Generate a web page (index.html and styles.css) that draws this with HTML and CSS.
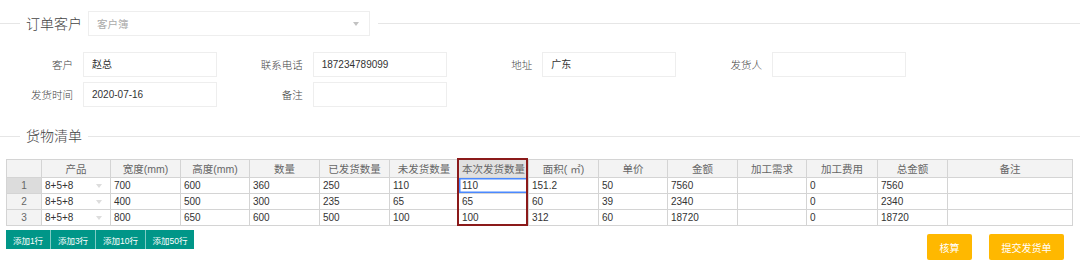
FILE: index.html
```html
<!DOCTYPE html>
<html lang="zh-CN">
<head>
    <meta charset="UTF-8">
    <title>发货单</title>
    <link rel="stylesheet" href="styles.css">
</head>
<body>

<div class="page">
    <!-- 订单客户 -->
    <div class="legend-row top">
        <span class="rule short"></span>
        <span class="legend">订单客户</span>
        <div class="select-box">
            <span class="placeholder">客户簿</span>
            <span class="caret"></span>
        </div>
        <span class="rule"></span>
    </div>

    <div class="form-grid">
        <div class="form-item"><label>客户</label><div class="input">赵总</div></div>
        <div class="form-item"><label>联系电话</label><div class="input">187234789099</div></div>
        <div class="form-item"><label>地址</label><div class="input">广东</div></div>
        <div class="form-item"><label>发货人</label><div class="input"></div></div>
        <div class="form-item"><label>发货时间</label><div class="input">2020-07-16</div></div>
        <div class="form-item"><label>备注</label><div class="input"></div></div>
    </div>

    <!-- 货物清单 -->
    <div class="legend-row goods">
        <span class="rule short"></span>
        <span class="legend">货物清单</span>
        <span class="rule"></span>
    </div>

    <div class="grid-wrap">
        <table class="grid">
            <colgroup>
                <col style="width:35px">
                <col style="width:69px">
                <col style="width:70px">
                <col style="width:69px">
                <col style="width:70px">
                <col style="width:70px">
                <col style="width:69px">
                <col style="width:70px">
                <col style="width:70px">
                <col style="width:69px">
                <col style="width:70px">
                <col style="width:69px">
                <col style="width:71px">
                <col style="width:70px">
                <col style="width:125px">
            </colgroup>
            <thead>
            <tr>
                <th class="corner"></th>
                <th>产品</th>
                <th>宽度(mm)</th>
                <th>高度(mm)</th>
                <th>数量</th>
                <th>已发货数量</th>
                <th>未发货数量</th>
                <th class="current">本次发货数量</th>
                <th>面积( ㎡)</th>
                <th>单价</th>
                <th>金额</th>
                <th>加工需求</th>
                <th>加工费用</th>
                <th>总金额</th>
                <th>备注</th>
            </tr>
            </thead>
            <tbody>
            <tr>
                <th class="row-no active">1</th>
                <td class="dropdown">8+5+8</td>
                <td>700</td><td>600</td><td>360</td><td>250</td><td>110</td>
                <td class="selected">110</td>
                <td>151.2</td><td>50</td><td>7560</td><td></td><td>0</td><td>7560</td><td></td>
            </tr>
            <tr>
                <th class="row-no">2</th>
                <td class="dropdown">8+5+8</td>
                <td>400</td><td>500</td><td>300</td><td>235</td><td>65</td>
                <td>65</td>
                <td>60</td><td>39</td><td>2340</td><td></td><td>0</td><td>2340</td><td></td>
            </tr>
            <tr>
                <th class="row-no">3</th>
                <td class="dropdown">8+5+8</td>
                <td>800</td><td>650</td><td>600</td><td>500</td><td>100</td>
                <td>100</td>
                <td>312</td><td>60</td><td>18720</td><td></td><td>0</td><td>18720</td><td></td>
            </tr>
            </tbody>
        </table>
        <!-- column highlight -->
        <div class="col-mark"></div>
    </div>

    <div class="actions">
        <div class="btn-group">
            <button class="btn teal">添加1行</button>
            <button class="btn teal">添加3行</button>
            <button class="btn teal">添加10行</button>
            <button class="btn teal">添加50行</button>
        </div>
        <div class="right-btns">
            <button class="btn warm calc">核算</button>
            <button class="btn warm submit">提交发货单</button>
        </div>
    </div>
</div>

</body>
</html>
```

FILE: styles.css
```css
* {
    box-sizing: border-box;
}

body {
    margin: 0;
    background: #fff;
    font-family: "Liberation Sans", "Noto Sans CJK SC", sans-serif;
    color: #333;
}

.page {
    width: 1080px;
    height: 262px;
    overflow: hidden;
}

/* legend rows */
.legend-row {
    display: flex;
    align-items: center;
}

.legend-row.top {
    margin-top: 11px;
    height: 25px;
}

.legend-row.goods {
    margin-top: 19px;
    height: 20px;
}

.rule {
    flex: 1;
    height: 1px;
    background: #e6e6e6;
}

.rule.short {
    flex: 0 0 20px;
}

.legend {
    font-size: 14px;
    font-weight: 300;
    color: #444;
    margin: 0 6px;
    line-height: 20px;
}

.select-box {
    width: 282px;
    height: 25px;
    border: 1px solid #eee;
    margin-right: 8px;
    display: flex;
    align-items: center;
    justify-content: space-between;
    padding: 0 8px;
}

.placeholder {
    font-size: 10.5px;
    color: #aaa;
}

.caret {
    width: 0;
    height: 0;
    border-left: 3px solid transparent;
    border-right: 3px solid transparent;
    border-top: 4px solid #c2c2c2;
    margin-right: 2px;
}

/* form */
.form-grid {
    display: grid;
    grid-template-columns: repeat(4, 229.67px);
    row-gap: 5px;
    margin-top: 16px;
    padding-left: 8px;
}

.form-item {
    display: flex;
    align-items: center;
}

.form-item label {
    width: 65px;
    margin-right: 10px;
    text-align: right;
    font-size: 10.5px;
    font-weight: 300;
    color: #444;
}

.input {
    width: 134px;
    height: 25px;
    border: 1px solid #eee;
    padding-left: 8px;
    font-size: 10px;
    line-height: 23px;
    color: #333;
}

/* goods table */
.grid-wrap {
    position: relative;
    margin: 13px 0 0 6px;
    width: 1067px;
}

.grid {
    table-layout: fixed;
    width: 1067px;
    border-collapse: collapse;
    font-size: 10px;
}

.grid th, .grid td {
    border: 1px solid #d4d4d4;
    padding: 0 3px;
    height: 16px;
    line-height: 14px;
    white-space: nowrap;
    overflow: hidden;
}

.grid thead th {
    height: 18px;
    background: #f3f3f3;
    color: #666;
    font-weight: normal;
    font-size: 10.5px;
    text-align: center;
}

.grid thead th.current {
    background: #e1e1e1;
}

.grid td {
    color: #333;
    text-align: left;
}

.grid .row-no {
    background: #f3f3f3;
    color: #666;
    font-weight: normal;
    text-align: center;
}

.grid .row-no.active {
    background: #dcdcdc;
}

.grid td.dropdown {
    position: relative;
}

.grid td.dropdown::after {
    content: "";
    position: absolute;
    right: 8px;
    top: 6px;
    border-left: 3px solid transparent;
    border-right: 3px solid transparent;
    border-top: 4px solid #ddd;
}

.grid td.selected {
    box-shadow: inset 0 0 0 1.5px #4b89ff;
}

.col-mark {
    position: absolute;
    left: 451px;
    top: -1px;
    width: 71px;
    height: 68px;
    border: 2px solid #8b1a1a;
    pointer-events: none;
}

/* buttons */
.actions {
    display: flex;
    justify-content: space-between;
    align-items: flex-start;
    margin-top: 4px;
    padding: 0 16px 0 6px;
}

.btn-group {
    display: flex;
}

.btn {
    border: none;
    color: #fff;
    font-family: inherit;
    cursor: pointer;
    padding: 0;
}

.btn.teal {
    background: #009688;
    height: 19px;
    font-size: 8.5px;
    border-left: 1px solid rgba(255, 255, 255, 0.5);
}

.btn.teal:nth-child(1) { width: 44px; border-left: none; }
.btn.teal:nth-child(2) { width: 45px; }
.btn.teal:nth-child(3) { width: 50px; }
.btn.teal:nth-child(4) { width: 49px; }

.right-btns {
    display: flex;
    gap: 17px;
    margin-top: 4px;
}

.btn.warm {
    background: #ffb800;
    height: 26px;
    font-size: 10px;
    border-radius: 2px;
}

.btn.calc {
    width: 45px;
}

.btn.submit {
    width: 75px;
}
```
